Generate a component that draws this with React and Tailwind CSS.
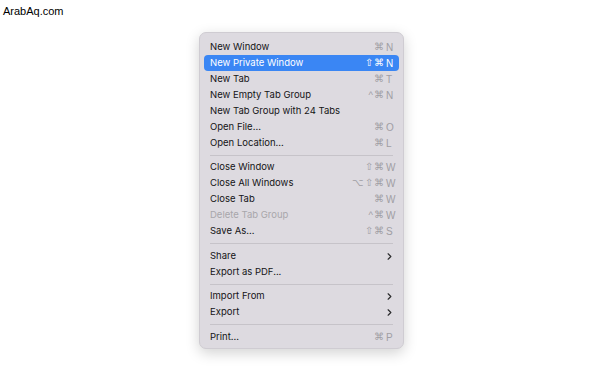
import { ChevronRight } from 'lucide-react';

const groups = [
  [
    { label: 'New Window', mods: '⌘', key: 'N' },
    { label: 'New Private Window', mods: '⇧⌘', key: 'N', active: true },
    { label: 'New Tab', mods: '⌘', key: 'T' },
    { label: 'New Empty Tab Group', mods: '^⌘', key: 'N' },
    { label: 'New Tab Group with 24 Tabs' },
    { label: 'Open File...', mods: '⌘', key: 'O' },
    { label: 'Open Location...', mods: '⌘', key: 'L' },
  ],
  [
    { label: 'Close Window', mods: '⇧⌘', key: 'W' },
    { label: 'Close All Windows', mods: '⌥⇧⌘', key: 'W' },
    { label: 'Close Tab', mods: '⌘', key: 'W' },
    { label: 'Delete Tab Group', mods: '^⌘', key: 'W', disabled: true },
    { label: 'Save As...', mods: '⇧⌘', key: 'S' },
  ],
  [
    { label: 'Share', submenu: true },
    { label: 'Export as PDF...' },
  ],
  [
    { label: 'Import From', submenu: true },
    { label: 'Export', submenu: true },
  ],
  [{ label: 'Print...', mods: '⌘', key: 'P' }],
];

const MenuRow = ({ item }) => {
  const { label, mods, key, active, disabled, submenu } = item;
  return (
    <div
      className={`flex items-center h-4 mx-1 pl-[6px] pr-[5px] rounded-[4px] ${
        active ? 'bg-[#3a86f4] text-white' : disabled ? 'text-[#a8a6ab]' : 'text-[#141416]'
      }`}
    >
      <span className="flex-1 truncate font-['Inter',sans-serif] text-[9.5px]">{label}</span>
      {mods && (
        <span className={`flex items-center text-[10px] ${active ? 'text-white' : 'text-[#a09ea4]'}`}>
          <span className="text-[9.5px] tracking-[1px]">{mods}</span>
          <span className="w-[8px] ml-[1px] text-left">{key}</span>
        </span>
      )}
      {submenu && <ChevronRight size={11} strokeWidth={2.5} className="text-[#2a2a2c] -mr-[1px]" />}
    </div>
  );
};

export default function App() {
  return (
    <div className="w-[608px] h-[371px] bg-white relative font-['Liberation_Sans',Arial,sans-serif] text-[11px]">
      <div className="absolute left-[3px] top-[3px] text-[11px] text-black">ArabAq.com</div>

      <div className="absolute left-[199px] top-[32px] w-[205px] pt-[6px] pb-[3px] bg-[#dddae0] border border-[#cfccd2] rounded-[7px] shadow-[0_4px_14px_rgba(0,0,0,0.18)]">
        {groups.map((group, gi) => (
          <div key={gi}>
            {gi > 0 && <div className="h-px bg-[#c6c3c9] mx-[10px] my-[3.75px]" />}
            {group.map((item) => (
              <MenuRow key={item.label} item={item} />
            ))}
          </div>
        ))}
      </div>
    </div>
  );
}
